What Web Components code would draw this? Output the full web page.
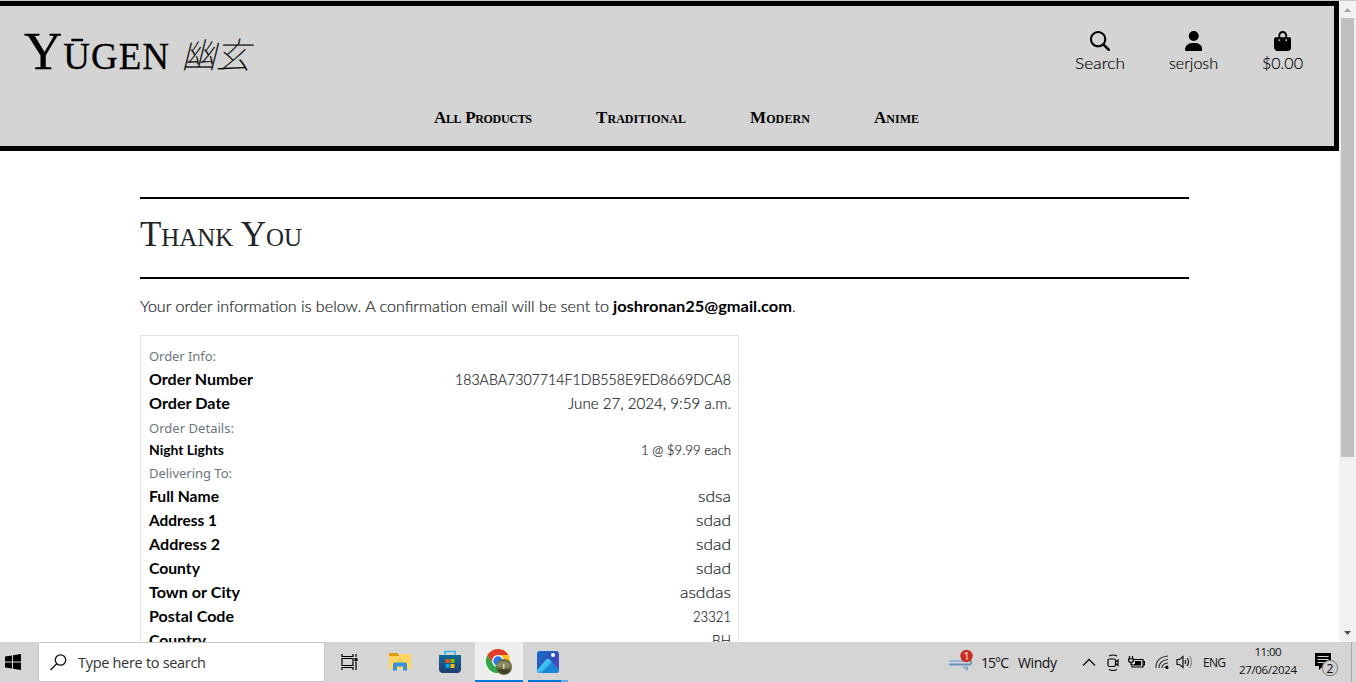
<!DOCTYPE html>
<html lang="en">
<head>
<meta charset="utf-8">
<title>Yūgen - Thank You</title>
<style>
html,body{margin:0;height:100%;overflow:hidden;background:#fff}
body{font-family:Lato,"Liberation Sans",sans-serif;color:#212529}
</style>
</head>
<body>
<desk-screen></desk-screen>
<script>
const define = (name, html, setup) => customElements.define(name, class extends HTMLElement {
  constructor() {
    super();
    const t = document.createElement('template');
    t.innerHTML = html;
    this.attachShadow({mode: 'open'}).append(t.content.cloneNode(true));
  }
  connectedCallback() { if (setup) setup(this, this.shadowRoot); }
});

/* A line of text exactly w pixels wide: the sans face is stretched, the others are tracked */
define('fit-text', `<style>:host{display:inline-block;white-space:nowrap;flex:none}span{display:inline-block;transform-origin:0 50%}</style><span><slot></slot></span>`, (el, root) => {
  const s = root.querySelector('span'), w = +el.getAttribute('w');
  s.style.letterSpacing = '0px';
  s.style.marginRight = '0px';
  s.style.transform = 'none';
  const natural = s.getBoundingClientRect().width;
  if (getComputedStyle(el).fontFamily.startsWith('Lato')) {
    el.style.width = w + 'px';
    s.style.transform = `scaleX(${w / natural})`;
    return;
  }
  const n = [...el.textContent].length;
  const ls = (w - natural) / Math.max(1, n - 1);
  s.style.letterSpacing = ls + 'px';
  s.style.marginRight = -ls + 'px';
});

define('header-link', `<style>
:host{display:flex;flex-direction:column;align-items:center;font-size:16px;font-weight:300;line-height:24px;color:#000;-webkit-text-stroke:.15px}
svg{height:20px;display:block}
</style><svg fill="#000"><path/></svg><slot></slot>`, (el, root) => {
  const w = el.getAttribute('box');
  const svg = root.querySelector('svg');
  svg.setAttribute('viewBox', `0 0 ${w} 512`);
  svg.style.width = w / 25.6 + 'px';
  root.querySelector('path').setAttribute('d', el.getAttribute('glyph'));
});

define('site-header', `<style>
:host{display:block;box-sizing:border-box;height:150px;border:5px solid #000;border-left:0;background:#d4d4d4;color:#000}
.top{display:flex;justify-content:space-between;padding:25px 31px 0 24px;height:75px;box-sizing:border-box}
.logo{display:flex;margin-top:-10px;height:60px;line-height:60px;font-family:"Liberation Serif",serif;font-size:53px;font-variant:small-caps;-webkit-text-stroke:.3px #000}
.kanji{font:italic 100 35px/60px "Noto Sans CJK JP",sans-serif;margin-left:12px;padding-top:2px;-webkit-text-stroke:.2px #000}
.links{display:flex;gap:44px}
nav{display:flex;gap:64px;padding:24px 0 0 434px;font:bold 17px/26px "Liberation Serif",serif;font-variant:small-caps}
</style>
<div class="top"><div class="logo"><fit-text w="145">Yūgen</fit-text><fit-text class="kanji" w="69">幽玄</fit-text></div>
<div class="links">
<header-link box="512" glyph="M416 208c0 45.9-14.9 88.3-40 122.7L502.600 457.400c12.500 12.500 12.500 32.800 0 45.300s-32.800 12.500-45.300 0L330.700 376c-34.400 25.200-76.800 40-122.700 40C93.100 416 0 322.900 0 208S93.100 0 208 0S416 93.100 416 208zM208 364a156 156 0 1 0 0-312 156 156 0 1 0 0 312z"><fit-text w="50">Search</fit-text></header-link>
<header-link box="448" glyph="M224 256A128 128 0 1 0 224 0a128 128 0 1 0 0 256zm-45.7 48C79.8 304 0 383.8 0 482.3C0 498.7 13.3 512 29.7 512H418.3c16.4 0 29.7-13.3 29.7-29.7C448 383.8 368.2 304 269.7 304H178.3z"><fit-text w="49">serjosh</fit-text></header-link>
<header-link box="448" glyph="M160 112c0-35.3 28.7-64 64-64s64 28.7 64 64v48H160V112zm-48 48H48c-26.5 0-48 21.5-48 48V416c0 53 43 96 96 96H352c53 0 96-43 96-96V208c0-26.5-21.5-48-48-48H336V112C336 50.1 285.9 0 224 0S112 50.1 112 112v48zm24 48a24 24 0 1 1 0 48 24 24 0 1 1 0-48zm152 24a24 24 0 1 1 48 0 24 24 0 1 1 -48 0z"><fit-text w="41">$0.00</fit-text></header-link>
</div></div>
<nav><fit-text w="98">All Products</fit-text><fit-text w="90">Traditional</fit-text><fit-text w="60">Modern</fit-text><fit-text w="45">Anime</fit-text></nav>`);

define('order-row', `<style>
:host{display:flex;justify-content:space-between;align-items:center;height:24px;font-size:16px;line-height:24px}
:host([small]){font-size:14px;height:20px}
b{font-weight:700;color:#000;display:flex}
span{font-weight:300;display:flex;-webkit-text-stroke:.2px}
</style><b><slot name="label"></slot></b><span><slot></slot></span>`);

define('order-heading', `<style>
:host{display:flex;align-items:center;height:24px;color:#6c757d;font:400 13px/24px "Noto Sans","Open Sans",sans-serif}
</style><slot></slot>`);

define('order-card', `<style>
:host{display:block;box-sizing:border-box;width:599px;height:420px;border:1px solid #dee2e6;padding:9px 7px 9px 8px}
.first{height:22px}.mid{height:25px;padding-top:1px;box-sizing:border-box}.last{padding-top:1px;box-sizing:border-box}
</style><order-heading class="first"><fit-text w="67">Order Info:</fit-text></order-heading>
<order-row><fit-text slot="label" w="104">Order Number</fit-text><fit-text w="276">183ABA7307714F1DB558E9ED8669DCA8</fit-text></order-row>
<order-row><fit-text slot="label" w="81">Order Date</fit-text><fit-text w="163">June 27, 2024, 9:59 a.m.</fit-text></order-row>
<order-heading class="mid"><fit-text w="85">Order Details:</fit-text></order-heading>
<order-row small><fit-text slot="label" w="75">Night Lights</fit-text><fit-text w="90">1 @ $9.99 each</fit-text></order-row>
<order-heading class="last"><fit-text w="83">Delivering To:</fit-text></order-heading>
<order-row><fit-text slot="label" w="70">Full Name</fit-text><fit-text w="33">sdsa</fit-text></order-row>
<order-row><fit-text slot="label" w="68">Address 1</fit-text><fit-text w="35">sdad</fit-text></order-row>
<order-row><fit-text slot="label" w="71">Address 2</fit-text><fit-text w="35">sdad</fit-text></order-row>
<order-row><fit-text slot="label" w="51">County</fit-text><fit-text w="35">sdad</fit-text></order-row>
<order-row><fit-text slot="label" w="91">Town or City</fit-text><fit-text w="51">asddas</fit-text></order-row>
<order-row><fit-text slot="label" w="85">Postal Code</fit-text><fit-text w="38">23321</fit-text></order-row>
<order-row><fit-text slot="label" w="57">Country</fit-text><fit-text w="19">BH</fit-text></order-row>`);

define('thank-you', `<style>
:host{display:block;padding:46px 150px 0 140px}
h2{margin:0;box-sizing:border-box;height:82px;border:solid #000;border-width:2px 0;font:400 35px/42px "Liberation Serif",serif;font-variant:small-caps;padding-top:15px;color:#212529}
p{margin:15px 0 17px;height:24px;font-size:16px;line-height:24px;font-weight:300;display:flex;-webkit-text-stroke:.2px}
b{color:#000;font-weight:700;margin-left:4px;-webkit-text-stroke:0}
</style><h2><fit-text w="162">Thank You</fit-text></h2>
<p><fit-text w="469">Your order information is below. A confirmation email will be sent to</fit-text><b><fit-text w="179">joshronan25@gmail.com</fit-text></b>.</p>
<order-card></order-card>`);

define('scroll-bar', `<style>
:host{display:flex;flex-direction:column;align-items:center;width:17px;background:#f1f1f1;flex:none}
svg{display:block;width:17px;height:17px;flex:none}i{width:13px;height:439px;margin-bottom:auto;background:#c1c1c1}
</style><svg><path d="M5 11 8.500 7 12 11z" fill="#a3a3a3"/></svg><i></i><svg><path d="M5 6 8.500 10 12 6z" fill="#505050"/></svg>`);

define('task-bar', `<style>
:host{display:flex;height:40px;background:#d5d5d5;color:#111;font-family:"Open Sans","Noto Sans",sans-serif;flex:none}
svg{display:block;flex:none}
.cell{display:flex;align-items:center;justify-content:center;width:50px;box-sizing:border-box;flex:none}
.start{width:38px;padding-right:11px}
.search{box-sizing:border-box;width:287px;border:1px solid #c6c6c6;background:#fff;display:flex;align-items:center;padding-left:11px;font-size:14.5px;color:#333;flex:none}
.search fit-text{margin-left:11px}
.chrome{width:48px;background:#eee;border-bottom:2px solid #0078d7;padding-top:2px}
.photos{width:40px;margin-left:5px;border-bottom:2px solid;border-image:linear-gradient(90deg,#0078d7 80%,#62aee8 80%) 1;padding-top:2px}
.tray{display:flex;align-items:center;margin-left:380px;font-size:14px}
.clock{display:flex;flex-direction:column;align-items:center;font-size:11.5px;line-height:18px;margin-left:13px;margin-top:-2px}
.end{width:1px;height:40px;background:#aaa;margin-left:12px}
</style>
<div class="cell start"><svg width="17" height="16"><path d="M0 2.500 7 1.500V7.500H0zM8 1.300 16 0V7.500H8zM0 8.500H7V14.500L0 13.500zM8 8.500H16V16L8 14.700z"/></svg></div>
<div class="search"><svg width="17" height="17" fill="none" stroke="#111" stroke-width="1.300"><circle cx="10.500" cy="6" r="5.200"/><path d="M6.700 9.800.5 16"/></svg><fit-text w="128">Type here to search</fit-text></div>
<div class="cell"><svg width="18" height="16" fill="none" stroke="#000" stroke-width="1.200"><path d="M1 0v2.500h11V0M1 16v-2.500h11V16M1 4.500h11v7H1zM15 0v3M15 7.500V16"/><path d="M13.500 4h3v3h-3z" fill="#000" stroke="none"/></svg></div>
<div class="cell"><svg width="22" height="20"><path d="M0 1.500Q0 1 1 1H8L10 3V7H0z" fill="#dda006"/><path d="M0 4H10L11 2H21Q22 2 22 3V17H0z" fill="#ffd45f"/><path d="M4 18.500V12Q4 10.500 5.500 10.500H16.500Q18 10.500 18 12V18.500H14V14.500H8V18.500z" fill="#3593dd"/></svg></div>
<div class="cell"><svg width="24" height="24"><defs><linearGradient id="s" x2="0" y2="1"><stop stop-color="#126a96"/><stop offset="1" stop-color="#203b70"/></linearGradient></defs><path d="M7 6V1.500H17V6" fill="none" stroke="#34bdf1" stroke-width="1.700"/><path d="M1 5H23V19Q23 23 19 23H5Q1 23 1 19z" fill="url(#s)"/><path d="M7.500 9h4v4h-4z" fill="#f25022"/><path d="M12.500 9h4v4h-4z" fill="#7fba00"/><path d="M7.500 14h4v4h-4z" fill="#00a4ef"/><path d="M12.500 14h4v4h-4z" fill="#ffb900"/></svg></div>
<div class="cell chrome"><svg width="28" height="28"><g transform="translate(13 13)"><circle r="12" fill="#fbc116"/><path d="M-10.400-6A12 12 0 0 0 0 12L5 3-5 3z" fill="#2da94f"/><path d="M-10.400-6A12 12 0 0 1 10.400-6H0L-5 3z" fill="#e33b2e"/><circle r="6" fill="#fff"/><circle r="4.700" fill="#267be8"/></g><circle cx="19" cy="19" r="8" fill="#686a42"/><path d="M12 16Q19 10 26 17L24 20 12 19z" fill="#8c8a60"/><path d="M18 16h1.500v5H18z" fill="#d7d6ac"/><path d="M12 22q6-2 14 0-6 8-14 0" fill="#3e4128"/></svg></div>
<div class="cell photos"><svg width="22" height="22"><defs><linearGradient id="p" x2="1" y2="1"><stop stop-color="#1370ce"/><stop offset=".6" stop-color="#3a4db9"/><stop offset="1" stop-color="#6940b7"/></linearGradient><linearGradient id="m" x2="1" y2="1"><stop stop-color="#60e3ff"/><stop offset="1" stop-color="#169ae0"/></linearGradient></defs><rect width="22" height="22" rx="3" fill="url(#p)"/><path d="M0 19 9.500 8.500Q11 7 12.500 8.500L22 18.500Q22 22 19 22H3Q0 22 0 19z" fill="#1787d6"/><path d="M0 19 9.500 8.500Q11 7 12.500 8.500L15 11 4 22H3Q0 22 0 19z" fill="url(#m)"/><circle cx="16" cy="4" r="2" fill="#fff"/></svg></div>
<div class="tray">
<svg width="25" height="24" style="margin-left:1px;margin-top:-2px"><g fill="none" stroke-linecap="round"><path d="M1 12H17Q20 12 20 8" stroke="#93b5d7" stroke-width="2"/><path d="M1 15.500H20Q23 15.500 22 12" stroke="#6790b9" stroke-width="2"/><path d="M15 18.500H18V21" stroke="#84a7cc" stroke-width="2"/></g><circle cx="17.500" cy="7" r="6.200" fill="#cb2d20"/><text x="17.500" y="11" text-anchor="middle" font-size="10" fill="#fff">1</text></svg>
<fit-text w="28" style="margin-left:7px">15°C</fit-text><fit-text w="39" style="margin-left:9px">Windy</fit-text>
<svg width="14" height="9" style="margin-left:25px" fill="none" stroke="#111" stroke-width="1.400"><path d="M1 7.500 7 1.500 13 7.500"/></svg>
<svg width="13" height="17" style="margin-left:11px" fill="none" stroke="#000" stroke-width="1.200"><rect x="1" y="5" width="7.500" height="7.500" rx="1.500"/><path d="M8.500 8 11 6v5.500L8.500 9.500M2 2Q6 0 10 2M2 15.500Q6 17.500 10 15.500"/></svg>
<svg width="17" height="13" style="margin-left:8px" fill="none" stroke="#000" stroke-width="1.200"><path d="M6 3.500H15V11H4V8M15 5.500h1.500v3.500H15M1.500 0v3M4.500 0v3M.5 3h5v2q-2.500 3-5 0zM3 6v3"/><path d="M7 5h6v4.500H5.500V8H7z" fill="#000" stroke="none"/></svg>
<svg width="14" height="14" style="margin-left:10px" fill="none" stroke="#333" stroke-width="1.200"><path d="M.8 13Q1 2 13 1M4 13Q4 5.500 13 4.500M7 13Q7 8.500 13 8M10 13Q10 11 13 11"/><circle cx="12" cy="12.500" r="1.500" fill="#000" stroke="none"/></svg>
<svg width="17" height="14" style="margin-left:7px" fill="none" stroke="#111" stroke-width="1.200"><path d="M1 4.500H3.500L7 1.500V12.500L3.500 9.500H1zM9 5q1.500 2 0 4M11 3q3 4 0 8"/><path d="M13.500 1q4 6 0 12" stroke="#888"/></svg>
<fit-text w="23" style="margin-left:10px;font-size:12px">ENG</fit-text>
<div class="clock"><fit-text w="27">11:00</fit-text><fit-text w="58">27/06/2024</fit-text></div>
<svg width="25" height="26" style="margin-left:17px;margin-top:6px"><path d="M1 1H17V14H9L5 18V14H1z"/><path d="M3.500 4.500h11M3.500 7.500h11M3.500 10.500h7" stroke="#d5d5d5"/><circle cx="16" cy="16" r="7.700" fill="#d0d0d0" stroke="#777"/><text x="16" y="20.500" text-anchor="middle" font-size="12" fill="#000">2</text></svg>
<div class="end"></div></div>`);

define('desk-screen', `<style>
:host{display:flex;flex-direction:column;height:682px;width:1356px;overflow:hidden;border-top:1px solid #c9cbc9;box-sizing:border-box}
.view{display:flex;flex:1;min-height:0}
main{flex:1;overflow:hidden;background:#fff}
</style><div class="view"><main><site-header></site-header><thank-you></thank-you></main><scroll-bar></scroll-bar></div><task-bar></task-bar>`);
</script>
</body>
</html>
